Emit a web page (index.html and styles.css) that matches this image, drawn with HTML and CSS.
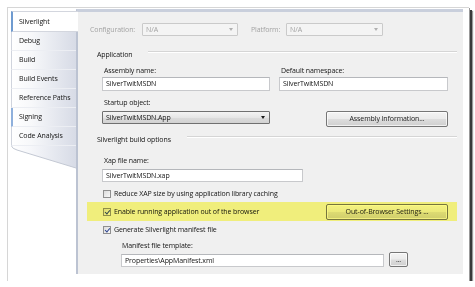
FILE: index.html
```html
<!DOCTYPE html>
<html lang="en">
<head>
    <meta charset="UTF-8">
    <title>Silverlight Project Properties</title>
    <link rel="stylesheet" href="styles.css">
</head>
<body>
    <div class="frame">
        <div class="window">
            <ul class="tabs">
                <li class="tab active">Silverlight</li>
                <li class="tab">Debug</li>
                <li class="tab">Build</li>
                <li class="tab">Build Events</li>
                <li class="tab">Reference Paths</li>
                <li class="tab focus">Signing</li>
                <li class="tab">Code Analysis</li>
                <li class="tail">
                    <svg width="65" height="24" viewBox="0 0 65 24">
                        <defs>
                            <linearGradient id="tailFill" x1="0" y1="0" x2="1" y2="0">
                                <stop offset="0" stop-color="#ffffff"/>
                                <stop offset="0.3" stop-color="#f6f7fa"/>
                                <stop offset="1" stop-color="#d7dbe6"/>
                            </linearGradient>
                        </defs>
                        <path d="M0 0 H65 V22 L6 4 Q1 2.5 0.5 0 Z" fill="url(#tailFill)"/>
                        <path d="M0.5 0 Q1 2.5 6 4 L65 22" fill="none" stroke="#c3c8d3" stroke-width="1"/>
                    </svg>
                </li>
            </ul>

            <div class="page">
                <div class="config-row">
                    <span class="dim cfg-label">Configuration:</span>
                    <div class="combo disabled cfg-combo">N/A<span class="arrow"></span></div>
                    <span class="dim plat-label">Platform:</span>
                    <div class="combo disabled plat-combo">N/A<span class="arrow"></span></div>
                </div>

                <div class="group-head"><span>Application</span><i class="rule"></i></div>

                <div class="app-grid">
                    <label class="field-label">Assembly name:</label>
                    <label class="field-label">Default namespace:</label>
                    <div class="textbox">SilverTwitMSDN</div>
                    <div class="textbox">SilverTwitMSDN</div>
                    <label class="field-label">Startup object:</label>
                    <span></span>
                    <div class="combo startup">SilverTwitMSDN.App<span class="arrow"></span></div>
                    <button class="btn info-btn">Assembly Information...</button>
                </div>

                <div class="group-head build-head"><span>Silverlight build options</span><i class="rule"></i></div>

                <div class="xap-field">
                    <label class="field-label">Xap file name:</label>
                    <div class="textbox xap-box">SilverTwitMSDN.xap</div>
                </div>

                <div class="check-row reduce-row">
                    <span class="checkbox"></span>
                    <span>Reduce XAP size by using application library caching</span>
                </div>

                <div class="check-row highlight">
                    <span class="checkbox checked"></span>
                    <span>Enable running application out of the browser</span>
                    <button class="btn oob-btn">Out-of-Browser Settings ...</button>
                </div>

                <div class="check-row manifest-row">
                    <span class="checkbox checked"></span>
                    <span>Generate Silverlight manifest file</span>
                </div>

                <div class="manifest">
                    <label class="field-label">Manifest file template:</label>
                    <div class="manifest-input">
                        <div class="textbox template-box">Properties\AppManifest.xml</div>
                        <button class="btn dots-btn">...</button>
                    </div>
                </div>
            </div>
        </div>
    </div>
</body>
</html>
```

FILE: styles.css
```css
body {
    margin: 0;
    background: #ffffff;
    font-family: "Open Sans", "Noto Sans", sans-serif;
    font-size: 7px;
    letter-spacing: -0.1px;
    line-height: 10px;
    color: #141414;
}

.frame {
    margin: 7px 0 0 7px;
    width: 452px;
    height: 265px;
    padding: 1px 6px 7px 3px;
    background: #ffffff;
    border-left: 1px solid #d6d6d6;
    border-top: 1px solid #d6d6d6;
    box-shadow: 1px 1px 0 #9a9a9a, 3px 3px 0 #3a3a3a, 4px 4px 1px #9a9a9a;
}

.window {
    display: flex;
    height: 265px;
}

/* left tab strip */
.tabs {
    list-style: none;
    margin: 0;
    padding: 2px 0 0;
    width: 65px;
    flex-shrink: 0;
}

.tab {
    height: 18px;
    padding-left: 7px;
    display: flex;
    align-items: center;
    border-left: 1px solid #d0d4dd;
    border-bottom: 1px solid #eceef3;
    background: linear-gradient(to right, #ffffff 0%, #f7f8fa 30%, #d7dbe6 100%);
}

.tab.active {
    height: 19px;
    background: #ffffff;
    border-top: 1px solid #d3d6de;
    border-bottom: 1px solid #d3d6de;
    border-left: 2px solid #6f9bd0;
    padding-left: 6px;
    margin-right: -2px;
    position: relative;
}

.tab.focus {
    border-left: 2px solid #8fb0dc;
    padding-left: 6px;
}

.tail {
    height: 24px;
    line-height: 0;
}

/* main property page */
.page {
    flex: 1;
    background: #f0f0f0;
    border-left: 2px solid #bcc3d2;
    border-top: 3px solid #c9cfdc;
    display: flex;
    flex-direction: column;
}

.dim {
    color: #a3a3a3;
}

.config-row {
    display: flex;
    align-items: center;
    margin-top: 11px;
    padding-left: 12px;
    height: 13px;
}

.cfg-label {
    width: 52px;
}

.plat-label {
    margin-left: 13px;
    width: 35px;
}

.combo {
    position: relative;
    height: 11px;
    line-height: 11px;
    padding-left: 3px;
    border: 1px solid #707070;
    border-radius: 1px;
    background: linear-gradient(#f4f4f4, #e6e6e6 50%, #dcdcdc 51%, #d2d2d2);
    box-sizing: content-box;
}

.combo.disabled {
    color: #a3a3a3;
    background: #f4f4f4;
    border-color: #cacaca;
}

.cfg-combo {
    width: 91px;
}

.plat-combo {
    width: 92px;
}

.arrow {
    position: absolute;
    right: 4px;
    top: 4px;
    width: 0;
    height: 0;
    border-left: 2.5px solid transparent;
    border-right: 2.5px solid transparent;
    border-top: 3px solid #1a1a1a;
}

.disabled .arrow {
    border-top-color: #b0b0b0;
}

.group-head {
    display: flex;
    align-items: flex-start;
    margin-top: 14px;
    padding-left: 19px;
    padding-right: 6px;
    height: 10px;
}

.group-head .rule {
    flex: 1;
    margin-left: 16px;
    margin-top: 1px;
    border-top: 1px solid #d5d5d5;
    border-bottom: 1px solid #ffffff;
}

.build-head {
    margin-top: 8px;
}

.app-grid {
    display: grid;
    grid-template-columns: 168px 169px;
    grid-template-rows: 11px 21px 13px 16px;
    column-gap: 9px;
    align-items: start;
    margin-top: 6px;
    padding-left: 24px;
}

.field-label {
    display: block;
    padding-left: 2px;
    height: 10px;
}

.textbox {
    height: 12px;
    line-height: 12px;
    padding-left: 3px;
    background: #ffffff;
    border: 1px solid #c8c9cc;
    border-top-color: #b5b7bb;
}

.startup {
    height: 11px;
}

.btn {
    font: inherit;
    letter-spacing: inherit;
    color: #222222;
    height: 16px;
    padding: 0;
    border: 1px solid #767676;
    border-radius: 2px;
    background: linear-gradient(#f4f4f4, #ebebeb 48%, #dddddd 52%, #cfcfcf);
    box-shadow: inset 0 0 0 1px rgba(255, 255, 255, 0.7);
}

.info-btn {
    width: 122px;
    margin-left: 47px;
}

.xap-field {
    margin-top: 11px;
    padding-left: 24px;
}

.xap-box {
    width: 196px;
    height: 11px;
    line-height: 11px;
    margin-top: 3px;
}

.check-row {
    display: flex;
    align-items: center;
    height: 10px;
    padding-left: 25px;
}

.reduce-row {
    margin-top: 7px;
}

.checkbox {
    width: 6px;
    height: 6px;
    margin-right: 3px;
    border: 1px solid #8f8f8f;
    background: linear-gradient(135deg, #dcdcdc, #f8f8f8);
    position: relative;
}

.checkbox.checked::after {
    content: "";
    position: absolute;
    left: 2px;
    top: 0;
    width: 1.5px;
    height: 4px;
    border-right: 1.2px solid #2c4490;
    border-bottom: 1.2px solid #2c4490;
    transform: rotate(40deg);
}

.highlight {
    position: relative;
    height: 19px;
    margin: 3px 6px 0 9px;
    padding-left: 16px;
}

.highlight::after {
    content: "";
    position: absolute;
    inset: 0;
    background: #fffd84;
    mix-blend-mode: multiply;
    pointer-events: none;
}

.oob-btn {
    width: 122px;
    margin-left: auto;
    margin-right: 9px;
}

.manifest-row {
    margin-top: 4px;
}

.manifest {
    margin-top: 6px;
    padding-left: 43px;
}

.manifest .field-label {
    padding-left: 1px;
}

.manifest-input {
    display: flex;
    align-items: flex-end;
    margin-top: 1px;
}

.template-box {
    width: 258px;
    height: 11px;
    line-height: 11px;
}

.dots-btn {
    width: 19px;
    height: 15px;
    margin-left: 5px;
    line-height: 8px;
}
```
